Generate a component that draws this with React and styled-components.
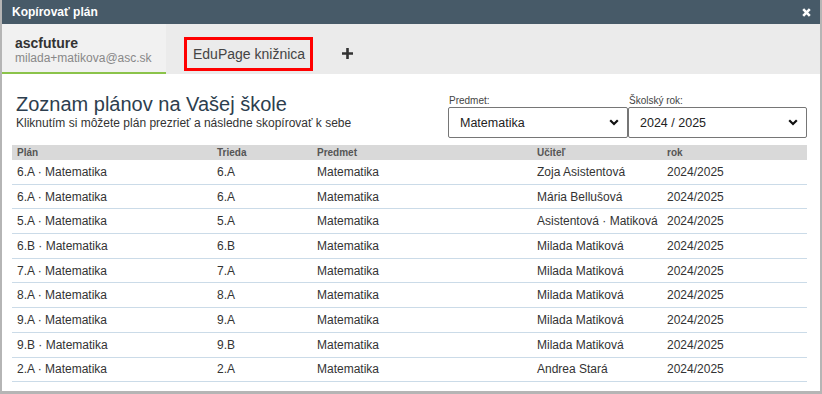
import React from 'react';
import styled, { createGlobalStyle } from 'styled-components';

const GlobalStyle = createGlobalStyle`
  html, body {
    margin: 0;
    padding: 0;
    background: #fff;
  }
  body, table, select {
    font-family: "Liberation Sans", Arial, sans-serif;
    color: #333;
  }
`;

const Window = styled.div`
  box-sizing: border-box;
  width: 822px;
  height: 394px;
  border: 2px solid #b5b5b5;
  border-top: none;
  border-bottom-width: 3px;
  background: #fff;
  display: flex;
  flex-direction: column;
  overflow: hidden;
`;

const TitleBar = styled.div`
  height: 24px;
  background: #475a68;
  display: flex;
  align-items: center;
  justify-content: space-between;
  padding: 0 9px 0 10px;
  color: #fff;
  font-size: 12px;
  font-weight: bold;
`;

const CloseButton = styled.svg`
  width: 9px;
  height: 9px;
  display: block;
`;

const TabBar = styled.div`
  height: 50px;
  background: #ebebeb;
  display: flex;
  align-items: stretch;
`;

const AccountTab = styled.div`
  box-sizing: border-box;
  width: 164px;
  padding: 11px 0 0 13px;
  background: #f1f1f1;
  border-bottom: 2px solid #8bc34a;
`;

const AccountName = styled.div`
  font-size: 14px;
  font-weight: bold;
  line-height: 16px;
  color: #333;
`;

const AccountMail = styled.div`
  font-size: 12px;
  line-height: 15px;
  color: #888;
`;

const LibraryTab = styled.div`
  box-sizing: border-box;
  align-self: flex-end;
  margin: 0 0 3px 18px;
  height: 34px;
  padding: 0 5px 0 6px;
  border: 3px solid #ff0000;
  display: flex;
  align-items: center;
  font-size: 14px;
  color: #444;
`;

const AddTab = styled.div`
  display: flex;
  align-items: center;
  margin-left: 29px;
  padding-top: 9px;
`;

const Content = styled.div`
  flex: 1;
  padding: 18px 13px 0 10px;
`;

const TopRow = styled.div`
  display: flex;
  justify-content: space-between;
  align-items: flex-start;
`;

const Heading = styled.div`
  padding-left: 4px;
`;

const Title = styled.h1`
  margin: 0;
  font-size: 20px;
  font-weight: normal;
  line-height: 24px;
  color: #2d3e4e;
`;

const Subtitle = styled.div`
  font-size: 12px;
  line-height: 14px;
  color: #333;
`;

const Filters = styled.div`
  display: flex;
  padding-top: 3px;
`;

const Field = styled.div`
  display: flex;
  flex-direction: column;
  width: ${(p) => p.$width}px;
`;

const Label = styled.div`
  font-size: 10px;
  line-height: 12px;
  color: #444;
  padding-left: 1px;
`;

const SelectBox = styled.div`
  box-sizing: border-box;
  height: 31px;
  border: 1px solid #767676;
  border-radius: 2px;
  display: flex;
  align-items: center;
  justify-content: space-between;
  padding: 0 8px 0 11px;
  font-size: 12.5px;
  color: #222;
  background: #fff;
`;

const Table = styled.table`
  width: 795px;
  margin-top: 7px;
  border-collapse: collapse;
  table-layout: fixed;
  font-family: "Liberation Sans", Arial, sans-serif;
`;

const HeadCell = styled.th`
  box-sizing: border-box;
  background: #d9d9d9;
  height: 15px;
  padding: 0 5px;
  font-size: 10px;
  font-weight: bold;
  color: #555;
  text-align: left;
  width: ${(p) => p.$width}px;
`;

const Row = styled.tr`
  border-bottom: 1px solid #cbdbe8;
`;

const Cell = styled.td`
  height: 23.7px;
  padding: 0 5px;
  font-size: 12px;
  color: #333;
  white-space: nowrap;
  overflow: visible;
`;

const Chevron = () => (
  <svg width="10" height="7" viewBox="0 0 10 7">
    <path d="M1.2 1.2 L5 5 L8.8 1.2" fill="none" stroke="#111" strokeWidth="2.2" />
  </svg>
);

const rows = [
  ['6.A · Matematika', '6.A', 'Matematika', 'Zoja Asistentová', '2024/2025'],
  ['6.A · Matematika', '6.A', 'Matematika', 'Mária Bellušová', '2024/2025'],
  ['5.A · Matematika', '5.A', 'Matematika', 'Asistentová · Matiková', '2024/2025'],
  ['6.B · Matematika', '6.B', 'Matematika', 'Milada Matiková', '2024/2025'],
  ['7.A · Matematika', '7.A', 'Matematika', 'Milada Matiková', '2024/2025'],
  ['8.A · Matematika', '8.A', 'Matematika', 'Milada Matiková', '2024/2025'],
  ['9.A · Matematika', '9.A', 'Matematika', 'Milada Matiková', '2024/2025'],
  ['9.B · Matematika', '9.B', 'Matematika', 'Milada Matiková', '2024/2025'],
  ['2.A · Matematika', '2.A', 'Matematika', 'Andrea Stará', '2024/2025'],
];

const columns = [
  ['Plán', 200],
  ['Trieda', 100],
  ['Predmet', 220],
  ['Učiteľ', 130],
  ['rok', 145],
];

export default function App() {
  return (
    <>
      <GlobalStyle />
      <Window>
        <TitleBar>
          <span>Kopírovať plán</span>
          <CloseButton viewBox="0 0 9 9">
            <path d="M1.2 1.2 L7.8 7.8 M7.8 1.2 L1.2 7.8" stroke="#fff" strokeWidth="2.6" />
          </CloseButton>
        </TitleBar>

        <TabBar>
          <AccountTab>
            <AccountName>ascfuture</AccountName>
            <AccountMail>milada+matikova@asc.sk</AccountMail>
          </AccountTab>
          <LibraryTab>EduPage knižnica</LibraryTab>
          <AddTab>
            <svg width="11" height="11" viewBox="0 0 11 11">
              <path d="M5.5 0 V11 M0 5.5 H11" stroke="#333" strokeWidth="2.6" />
            </svg>
          </AddTab>
        </TabBar>

        <Content>
          <TopRow>
            <Heading>
              <Title>Zoznam plánov na Vašej škole</Title>
              <Subtitle>Kliknutím si môžete plán prezrieť a následne skopírovať k sebe</Subtitle>
            </Heading>
            <Filters>
              <Field $width={180}>
                <Label>Predmet:</Label>
                <SelectBox>
                  <span>Matematika</span>
                  <Chevron />
                </SelectBox>
              </Field>
              <Field $width={179}>
                <Label>Školský rok:</Label>
                <SelectBox>
                  <span>2024 / 2025</span>
                  <Chevron />
                </SelectBox>
              </Field>
            </Filters>
          </TopRow>

          <Table>
            <thead>
              <tr>
                {columns.map(([name, w]) => (
                  <HeadCell key={name} $width={w}>{name}</HeadCell>
                ))}
              </tr>
            </thead>
            <tbody>
              {rows.map((r, i) => (
                <Row key={i}>
                  {r.map((c, j) => (
                    <Cell key={j}>{c}</Cell>
                  ))}
                </Row>
              ))}
            </tbody>
          </Table>
        </Content>
      </Window>
    </>
  );
}
